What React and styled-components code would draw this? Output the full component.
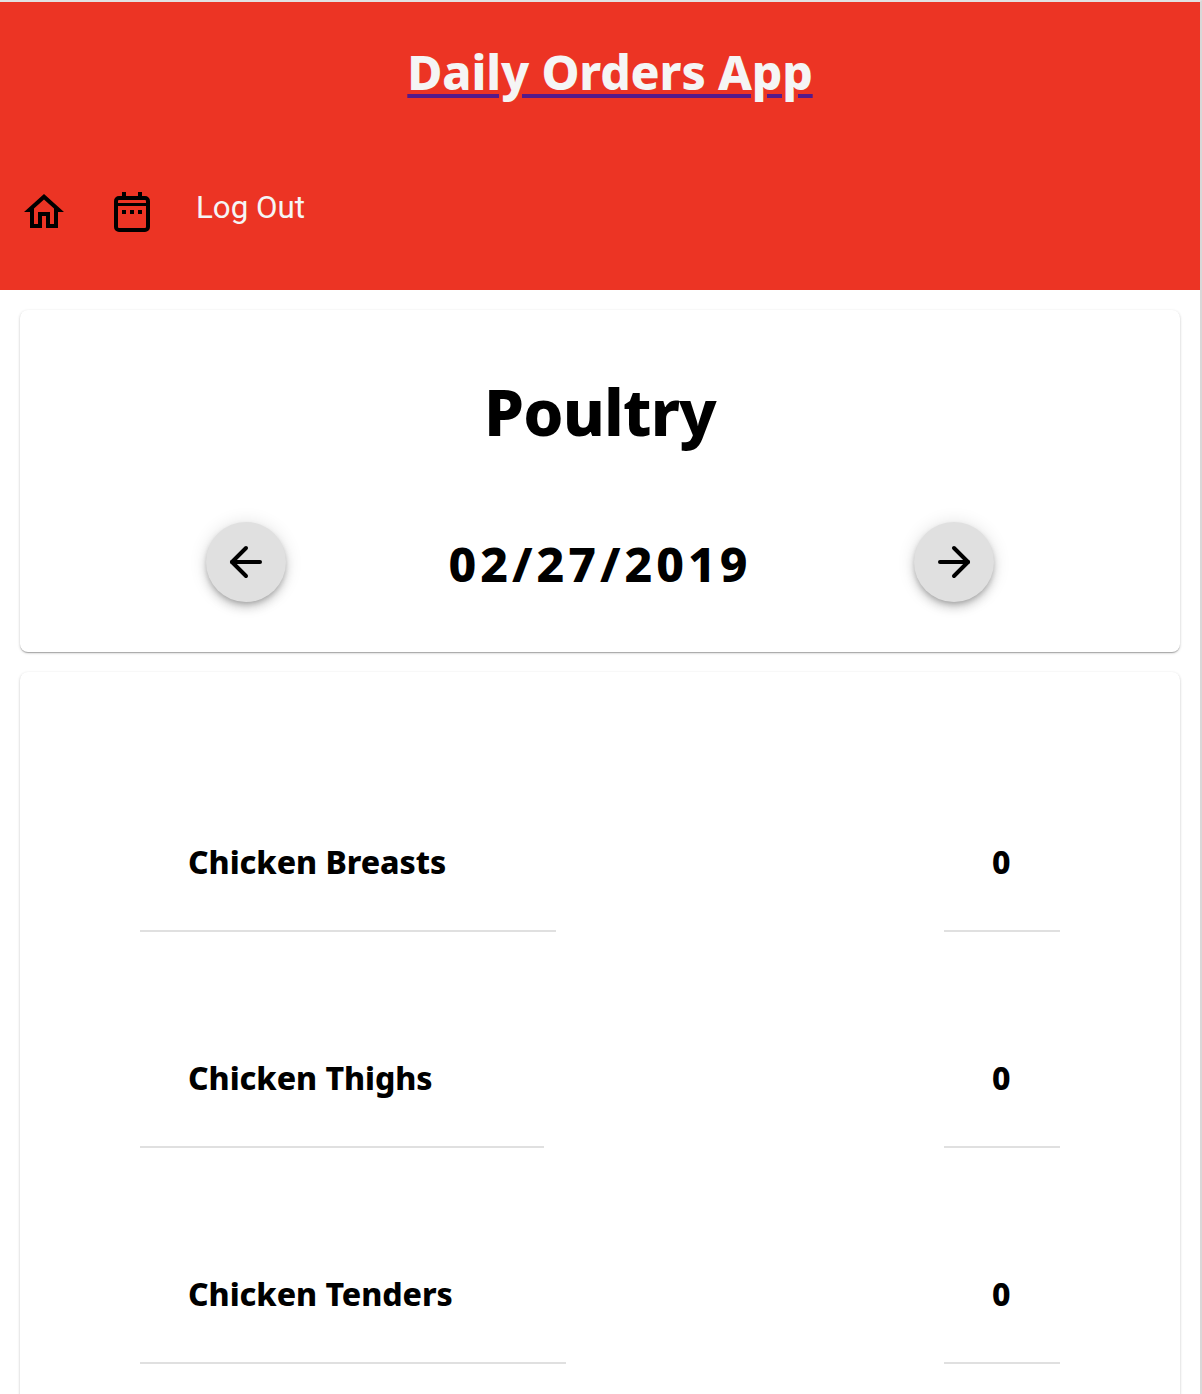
import React from 'react';
import styled, { createGlobalStyle } from 'styled-components';
import { ArrowLeft, ArrowRight } from 'lucide-react';

const heading = '"Noto Sans", "DejaVu Sans", sans-serif';

const GlobalStyle = createGlobalStyle`
  html, body {
    margin: 0;
    padding: 0;
    background: #ffffff;
  }
  body {
    height: 1394px;
    overflow: hidden;
    font-family: Roboto, sans-serif;
  }
`;

const Page = styled.div`
  width: 1200px;
  height: 1392px;
  overflow: hidden;
  border-top: 2px solid #e2e2e2;
  border-right: 2px solid #d8d8d8;
`;

const Header = styled.header`
  height: 288px;
  background: #ec3424;
  display: flex;
  flex-direction: column;
`;

const TitleRow = styled.div`
  display: flex;
  justify-content: center;
  padding: 37px 0 0 20px;
  height: 149px;
  box-sizing: border-box;
`;

const TitleLink = styled.a`
  font-family: ${heading};
  font-size: 48px;
  line-height: 66px;
  font-weight: 800;
  letter-spacing: -0.15px;
  color: #f5f5f5;
  text-decoration: underline #551a8b 4px;
  text-underline-offset: 4px;
`;

const Nav = styled.nav`
  display: flex;
  align-items: center;
  height: 48px;
  margin-top: 37px;
`;

const HomeLink = styled.a`
  display: block;
  width: 48px;
  height: 48px;
  margin: 0 44px 0 20px;
`;

const CalendarLink = styled.a`
  display: block;
  width: 36px;
  height: 40px;
  margin: 0 46px 0 2px;
`;

const LogOut = styled.a`
  color: #f5f5f5;
  font-size: 31.3px;
  line-height: 40px;
  margin-top: -8px;
`;

const Main = styled.main`
  padding: 20px 20px 0;
  display: flex;
  flex-direction: column;
  gap: 20px;
`;

const Card = styled.section`
  background: #ffffff;
  border-radius: 8px;
  box-shadow: 0 1px 3px rgba(0, 0, 0, 0.2), 0 1px 1px rgba(0, 0, 0, 0.14), 0 2px 1px -1px rgba(0, 0, 0, 0.12);
`;

const DateCard = styled(Card)`
  height: 342px;
  display: flex;
  flex-direction: column;
  align-items: center;
`;

const Department = styled.h1`
  margin: 58px 0 0;
  font-family: ${heading};
  font-size: 64px;
  line-height: 88px;
  font-weight: 800;
  letter-spacing: -0.85px;
  color: #000000;
`;

const DateRow = styled.div`
  width: 788px;
  margin-top: 66px;
  display: flex;
  align-items: center;
  justify-content: space-between;
`;

const RoundButton = styled.button`
  width: 80px;
  height: 80px;
  padding: 0;
  border: 0;
  border-radius: 50%;
  background: #e0e0e0;
  color: #000000;
  display: flex;
  align-items: center;
  justify-content: center;
  box-shadow: 0 3px 5px -1px rgba(0, 0, 0, 0.2), 0 6px 10px 0 rgba(0, 0, 0, 0.14), 0 1px 18px 0 rgba(0, 0, 0, 0.12);
`;

const DateText = styled.h2`
  margin: 4px 0 0;
  font-family: ${heading};
  font-size: 48px;
  line-height: 66px;
  font-weight: 800;
  letter-spacing: 4px;
  color: #000000;
`;

const ItemsCard = styled(Card)`
  padding: 43px 120px 0;
  height: 760px;
`;

const ItemRow = styled.div`
  height: 216px;
  display: flex;
  align-items: flex-end;
  justify-content: space-between;
  &:first-child { height: 217px; }
`;

const Cell = styled.div`
  box-sizing: border-box;
  width: ${(p) => p.$width}px;
  height: 92px;
  padding-left: 48px;
  font-family: ${heading};
  font-size: 32px;
  line-height: 44px;
  font-weight: 800;
  letter-spacing: -0.05px;
  color: #000000;
  border-bottom: 2px solid #e0e0e0;
`;

const items = [
  { name: 'Chicken Breasts', width: 416 },
  { name: 'Chicken Thighs', width: 404 },
  { name: 'Chicken Tenders', width: 426 },
];

function HomeIcon() {
  return (
    <svg width="48" height="48" viewBox="0 0 24 24" fill="#000000">
      <path d="M12 5.69l5 4.5V18h-2v-6H9v6H7v-7.81l5-4.5M12 3L2 12h3v8h6v-6h2v6h6v-8h3L12 3z" />
    </svg>
  );
}

function CalendarIcon() {
  return (
    <svg width="36" height="40" viewBox="0 0 36 40" fill="none">
      <rect x="2" y="6" width="32" height="32" rx="3" stroke="#000000" strokeWidth="4" />
      <path d="M8 0h4v6H8zM24 0h4v6h-4zM2 11h32v3H2z" fill="#000000" />
      <path d="M8 18h4v4H8zM16 18h4v4h-4zM24 18h4v4h-4z" fill="#000000" />
    </svg>
  );
}

export default function App() {
  return (
    <Page>
      <GlobalStyle />
      <Header>
        <TitleRow>
          <TitleLink href="#">Daily Orders App</TitleLink>
        </TitleRow>
        <Nav>
          <HomeLink href="#"><HomeIcon /></HomeLink>
          <CalendarLink href="#"><CalendarIcon /></CalendarLink>
          <LogOut>Log Out</LogOut>
        </Nav>
      </Header>
      <Main>
        <DateCard>
          <Department>Poultry</Department>
          <DateRow>
            <RoundButton><ArrowLeft size={48} /></RoundButton>
            <DateText>02/27/2019</DateText>
            <RoundButton><ArrowRight size={48} /></RoundButton>
          </DateRow>
        </DateCard>
        <ItemsCard>
          {items.map((item) => (
            <ItemRow key={item.name}>
              <Cell $width={item.width}>{item.name}</Cell>
              <Cell $width={116}>0</Cell>
            </ItemRow>
          ))}
        </ItemsCard>
      </Main>
    </Page>
  );
}
